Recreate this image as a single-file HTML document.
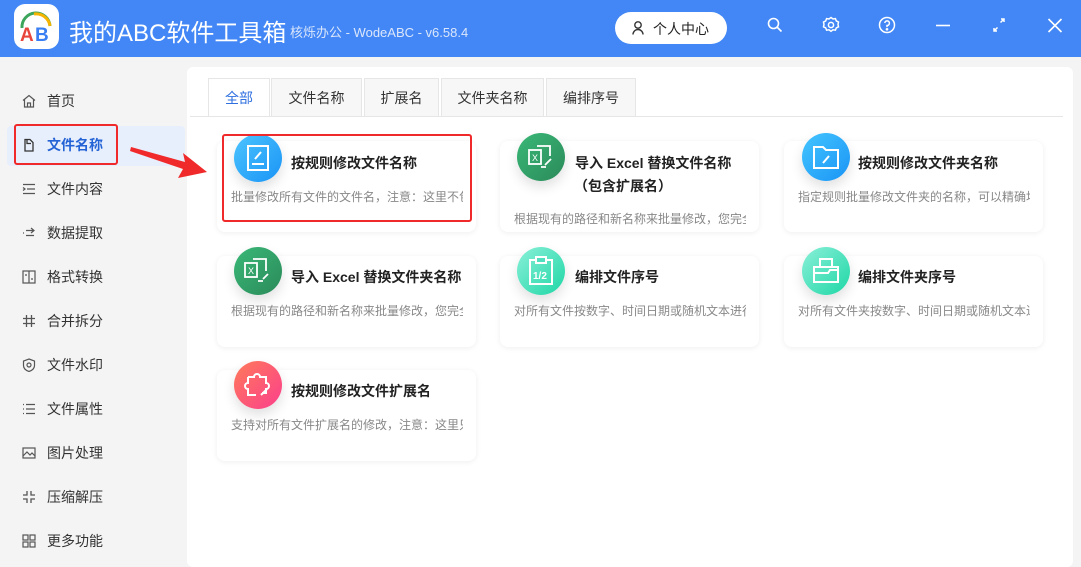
<!DOCTYPE html>
<html><head><meta charset="utf-8"><style>
*{margin:0;padding:0;box-sizing:border-box}
body{width:1081px;height:558px;overflow:hidden;background:#f4f4f4;font-family:"Liberation Sans","Noto Sans CJK SC",sans-serif;position:relative}
.hdr{position:absolute;left:0;top:0;width:1081px;height:57px;background:#4287f5}
.logo{position:absolute;left:14px;top:4px;width:45px;height:45px;background:#fff;border-radius:11px}
.title{position:absolute;left:69px;top:13px;color:#fff;font-size:24px}
.ver{position:absolute;left:290px;top:22px;color:#dbe6fb;font-size:13px}
.user{position:absolute;left:615px;top:12px;width:112px;height:32px;background:#fff;border-radius:16px;font-size:14px;color:#222;padding:7px 0 0 38px}
.ic{position:absolute;top:16px}
.side{position:absolute;left:0;top:57px;width:187px;height:501px}
.si{position:absolute;left:22px;font-size:14px;color:#333;height:20px;display:flex;align-items:center}
.si svg{width:14px;height:14px;margin-right:11px}
.sel{position:absolute;left:7px;top:126px;width:178px;height:40px;background:#e8effc;border-radius:4px}
.panel{position:absolute;left:187px;top:67px;width:886px;height:500px;background:#fff;border-radius:6px}
.tab{position:absolute;top:78px;height:39px;background:#f7f7f7;border:1px solid #e6e6e6;border-bottom:none;font-size:14px;color:#333;text-align:center;line-height:38px}
.line{position:absolute;left:190px;top:116px;width:873px;height:1px;background:#e6e6e6}
.card{position:absolute;width:259px;height:91px;background:#fff;border-radius:8px;box-shadow:0 1px 6px rgba(0,0,0,.07)}
.circ{position:absolute;width:48px;height:48px;border-radius:50%;box-shadow:0 6px 12px rgba(0,0,0,.12)}
.ct{position:absolute;font-size:14px;font-weight:bold;color:#222;white-space:nowrap}
.cd{position:absolute;font-size:12px;color:#888;white-space:nowrap;overflow:hidden}
</style></head><body>
<div class="hdr">
<div class="logo"><svg width="45" height="45" viewBox="0 0 45 45"><path d="M8 24 A14 14 0 0 1 36 22" fill="none" stroke="#3ca55c" stroke-width="3"/><path d="M20 10 A14 14 0 0 1 36 22" fill="none" stroke="#f5b400" stroke-width="3"/><text x="6" y="37" font-size="19" font-weight="bold" fill="#e8453c" font-family="Liberation Sans">A</text><text x="21" y="37" font-size="19" font-weight="bold" fill="#3a7ef3" font-family="Liberation Sans">B</text></svg></div>
<div class="title">我的ABC软件工具箱</div>
<div class="ver">核烁办公 - WodeABC - v6.58.4</div>
<div class="user"><svg style="position:absolute;left:17px;top:9px" width="12" height="14" viewBox="0 0 12 14"><circle cx="6" cy="4" r="3.2" fill="none" stroke="#333" stroke-width="1.4"/><path d="M1 13.5a5 5 0 0 1 10 0" fill="none" stroke="#333" stroke-width="1.4"/></svg>个人中心</div>
<svg class="ic" style="left:766px" width="18" height="18" viewBox="0 0 18 18" fill="none" stroke="#fff" stroke-width="1.6"><circle cx="7.5" cy="7.5" r="5"/><path d="M11 11l4.5 4.5"/></svg>
<svg class="ic" style="left:822px" width="18" height="18" viewBox="0 0 18 18" fill="none" stroke="#fff" stroke-width="1.5"><path d="M9 1.5l2 1.5 2.4-.4.9 2.3 2.2 1.1-.5 2.4.5 2.4-2.2 1.1-.9 2.3-2.4-.4-2 1.5-2-1.5-2.4.4-.9-2.3-2.2-1.1.5-2.4-.5-2.4 2.2-1.1.9-2.3 2.4.4z"/><circle cx="9" cy="9" r="2.6"/></svg>
<svg class="ic" style="left:878px" width="18" height="18" viewBox="0 0 18 18" fill="none" stroke="#fff" stroke-width="1.5"><circle cx="9" cy="9" r="7.5"/><path d="M6.8 7a2.3 2.3 0 1 1 2.2 2.5v1.6"/><circle cx="9" cy="13.3" r=".6" fill="#fff"/></svg>
<svg class="ic" style="left:935px" width="16" height="18"><path d="M1 9.5h14" stroke="#fff" stroke-width="1.6"/></svg>
<svg class="ic" style="left:991px" width="16" height="18" viewBox="0 0 16 18" fill="none" stroke="#fff" stroke-width="1.5"><path d="M3 15l3.5-3.5M9.5 6.5L13 3M3 12v3h3M10 3h3v3"/></svg>
<svg class="ic" style="left:1047px" width="16" height="18" viewBox="0 0 16 18" fill="none" stroke="#fff" stroke-width="1.6"><path d="M1.5 3l13 13M14.5 3l-13 13"/></svg>
</div>
<div class="side">
<div class="sel" style="top:69px"></div>
</div>
<div class="si" style="top:91px"><svg viewBox="0 0 14 14" fill="none" stroke="#555" stroke-width="1.2"><path d="M1 6.5L7 1.5l6 5M2.5 5.5V13h9V5.5M5.5 13V9h3v4"/></svg>首页</div>
<div class="si" style="top:135px;color:#2463d6;font-weight:bold"><svg viewBox="0 0 14 14" fill="none" stroke="#333" stroke-width="1.3"><path d="M3 1.5h5l3 3V13H3zM5 1.5v4h4"/></svg>文件名称</div>
<div class="si" style="top:179px"><svg viewBox="0 0 14 14" fill="none" stroke="#555" stroke-width="1.2"><path d="M1 2.5h12M5 7h8M1 11.5h12M1 5.5l2 1.5-2 1.5"/></svg>文件内容</div>
<div class="si" style="top:223px"><svg viewBox="0 0 14 14" fill="none" stroke="#555" stroke-width="1.2"><path d="M4 4.5h8M9 2l3 2.5L9 7M4 9.5h8M1 7h1"/></svg>数据提取</div>
<div class="si" style="top:267px"><svg viewBox="0 0 14 14" fill="none" stroke="#555" stroke-width="1.2"><rect x="1" y="1" width="12" height="12"/><path d="M7 1v12M3 5h2M9 9h2"/></svg>格式转换</div>
<div class="si" style="top:311px"><svg viewBox="0 0 14 14" fill="none" stroke="#555" stroke-width="1.3"><path d="M4.5 1v12M9.5 1v12M1 4.5h12M1 9.5h12"/></svg>合并拆分</div>
<div class="si" style="top:355px"><svg viewBox="0 0 14 14" fill="none" stroke="#555" stroke-width="1.2"><path d="M7 1l5.5 2v4.5C12.5 10.5 10 12.5 7 13.5 4 12.5 1.5 10.5 1.5 7.5V3z"/><circle cx="7" cy="7" r="2"/></svg>文件水印</div>
<div class="si" style="top:399px"><svg viewBox="0 0 14 14" fill="none" stroke="#555" stroke-width="1.2"><path d="M1 2.5h1M4 2.5h9M1 7h1M4 7h9M1 11.5h1M4 11.5h9"/></svg>文件属性</div>
<div class="si" style="top:443px"><svg viewBox="0 0 14 14" fill="none" stroke="#555" stroke-width="1.2"><rect x="1" y="2" width="12" height="10"/><path d="M1 10l4-4 3 3 2-2 3 3"/></svg>图片处理</div>
<div class="si" style="top:487px"><svg viewBox="0 0 14 14" fill="none" stroke="#555" stroke-width="1.3"><path d="M5 1v4H1M9 1v4h4M5 13V9H1M9 13V9h4"/></svg>压缩解压</div>
<div class="si" style="top:531px"><svg viewBox="0 0 14 14" fill="none" stroke="#555" stroke-width="1.2"><rect x="1" y="1" width="5" height="5"/><rect x="8" y="1" width="5" height="5"/><rect x="1" y="8" width="5" height="5"/><rect x="8" y="8" width="5" height="5"/></svg>更多功能</div>
<div style="position:absolute;left:14px;top:124px;width:104px;height:41px;border:2.5px solid #f02a2a;border-radius:3px"></div>
<div class="panel"></div>
<div class="tab" style="left:208px;width:62px;background:#fff;color:#2f6fe0">全部</div>
<div class="tab" style="left:271px;width:91px">文件名称</div>
<div class="tab" style="left:364px;width:75px">扩展名</div>
<div class="tab" style="left:441px;width:103px">文件夹名称</div>
<div class="tab" style="left:546px;width:90px">编排序号</div>
<div class="line"></div>

<div class="card" style="left:217px;top:141px"></div>
<div class="card" style="left:500px;top:141px"></div>
<div class="card" style="left:784px;top:141px"></div>
<div class="card" style="left:217px;top:256px"></div>
<div class="card" style="left:500px;top:256px"></div>
<div class="card" style="left:784px;top:256px"></div>
<div class="card" style="left:217px;top:370px"></div>

<div class="circ" style="left:234px;top:134px;background:linear-gradient(135deg,#4cc4ff,#1a94f5)"><svg width="48" height="48" fill="none" stroke="#fff" stroke-width="2"><rect x="14" y="12" width="20" height="24"/><path d="M18 30h12M21 25l6-7"/></svg></div>
<div class="ct" style="left:291px;top:153px">按规则修改文件名称</div>
<div class="cd" style="left:231px;top:188px;width:232px">批量修改所有文件的文件名，注意：这里不包含扩展名</div>

<div class="circ" style="left:517px;top:133px;background:linear-gradient(135deg,#3ab877,#2b8a5a)"><svg width="48" height="48" fill="none" stroke="#fff" stroke-width="1.8"><rect x="12" y="17" width="12" height="14"/><path d="M20 13h13v10M24 34h5M28 32l6-6"/><text x="15" y="28" font-size="9" fill="#fff" stroke="none">X</text></svg></div>
<div class="ct" style="left:575px;top:153px">导入 Excel 替换文件名称</div>
<div class="ct" style="left:574px;top:176px">（包含扩展名）</div>
<div class="cd" style="left:514px;top:210px;width:232px">根据现有的路径和新名称来批量修改，您完全可以</div>

<div class="circ" style="left:802px;top:133px;background:linear-gradient(135deg,#45c5ff,#1a94f5)"><svg width="48" height="48" fill="none" stroke="#fff" stroke-width="2"><path d="M12 14h9l3 3h12v18H12z"/><path d="M21 30l6-7"/></svg></div>
<div class="ct" style="left:858px;top:153px">按规则修改文件夹名称</div>
<div class="cd" style="left:798px;top:188px;width:232px">指定规则批量修改文件夹的名称，可以精确地</div>

<div class="circ" style="left:234px;top:247px;background:linear-gradient(135deg,#3ab877,#2b8a5a)"><svg width="48" height="48" fill="none" stroke="#fff" stroke-width="1.8"><rect x="11" y="16" width="12" height="14"/><path d="M19 12h13v12M24 34h5M29 32l5-5"/><text x="14" y="27" font-size="9" fill="#fff" stroke="none">X</text></svg></div>
<div class="ct" style="left:291px;top:267px">导入 Excel 替换文件夹名称</div>
<div class="cd" style="left:231px;top:302px;width:232px">根据现有的路径和新名称来批量修改，您完全可以</div>

<div class="circ" style="left:517px;top:247px;background:linear-gradient(135deg,#8af0d8,#1fd7a6)"><svg width="48" height="48" fill="none" stroke="#fff" stroke-width="2"><rect x="13" y="13" width="22" height="24"/><rect x="19" y="10" width="10" height="6" fill="#4ee0be"/><text x="16" y="32" font-size="10" fill="#fff" stroke="none" font-weight="bold">1/2</text></svg></div>
<div class="ct" style="left:575px;top:267px">编排文件序号</div>
<div class="cd" style="left:514px;top:302px;width:232px">对所有文件按数字、时间日期或随机文本进行编号</div>

<div class="circ" style="left:802px;top:247px;background:linear-gradient(135deg,#8af0d8,#1fd7a6)"><svg width="48" height="48" fill="none" stroke="#fff" stroke-width="2"><rect x="18" y="12" width="12" height="8"/><path d="M12 20h24v15H12zM12 26h14l2-3h8"/></svg></div>
<div class="ct" style="left:858px;top:267px">编排文件夹序号</div>
<div class="cd" style="left:798px;top:302px;width:232px">对所有文件夹按数字、时间日期或随机文本进行</div>

<div class="circ" style="left:234px;top:361px;background:linear-gradient(135deg,#ff7a5a,#fb3f8c)"><svg width="48" height="48" fill="none" stroke="#fff" stroke-width="2"><path d="M14 16h6a3 3 0 0 1 6 0h6v6a3 3 0 0 1 0 6v4h-4M14 16v6a3 3 0 0 0 0 6v6h8M27 34l6-6"/></svg></div>
<div class="ct" style="left:291px;top:381px">按规则修改文件扩展名</div>
<div class="cd" style="left:231px;top:416px;width:232px">支持对所有文件扩展名的修改，注意：这里只修改</div>

<div style="position:absolute;left:222px;top:134px;width:250px;height:88px;border:2.5px solid #f02a2a;border-radius:3px"></div>
<svg style="position:absolute;left:128px;top:140px;overflow:visible" width="90" height="45"><polygon points="2,11 3,7 57,22 55,13 79,32 50,38 55,29" fill="#f02a2a"/></svg>
</body></html>
